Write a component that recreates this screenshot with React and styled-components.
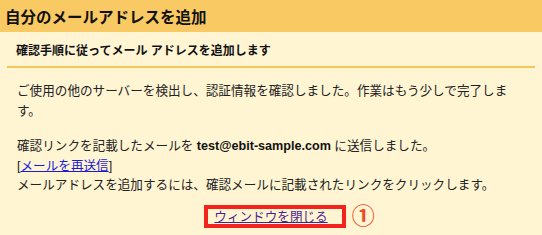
import React from 'react'
import styled, { createGlobalStyle } from 'styled-components'

const GlobalStyle = createGlobalStyle`
  html, body {
    margin: 0;
    padding: 0;
    background: #fff5d3;
  }
  body {
    font-family: "Liberation Sans", "Noto Sans CJK JP", sans-serif;
    color: #222;
  }
`

const App = () => {
  return (
    <Page>
      <GlobalStyle />
      <Header>自分のメールアドレスを追加</Header>
      <Content>
        <SubHead>確認手順に従ってメール アドレスを追加します</SubHead>
        <Message>
          <Para>
            ご使用の他のサーバーを検出し、認証情報を確認しました。作業はもう少しで完了します。
          </Para>
          <Para>
            確認リンクを記載したメールを <b>test@ebit-sample.com</b> に送信しました。
            <br />
            [<TextLink href="#">メールを再送信</TextLink>]
            <br />
            メールアドレスを追加するには、確認メールに記載されたリンクをクリックします。
          </Para>
        </Message>
        <Actions>
          <CloseBox>
            <CloseLink href="#">ウィンドウを閉じる</CloseLink>
            <Marker>①</Marker>
          </CloseBox>
        </Actions>
      </Content>
    </Page>
  )
}

export default App

const Page = styled.div`
  width: 542px;
  height: 235px;
  overflow: hidden;
  background: #fff5d3;
`

const Header = styled.div`
  height: 32px;
  background: #f9c964;
  display: flex;
  align-items: center;
  padding-left: 5px;
  font-size: 15.5px;
  font-weight: bold;
  color: #111;
`

const Content = styled.div`
  padding: 0 7px;
`

const SubHead = styled.div`
  height: 36px;
  display: flex;
  align-items: center;
  padding-left: 9px;
  padding-top: 1px;
  box-sizing: border-box;
  font-size: 12px;
  font-weight: bold;
  color: #111;
  border-bottom: 2px solid #f7c65a;
`

const Message = styled.div`
  padding: 14px 10px 0;
  font-size: 12.6px;
  line-height: 19.5px;
`

const Para = styled.p`
  margin: 0 0 16px;
  width: 500px;

  &:last-child {
    margin-bottom: 0;
  }

  b {
    font-weight: bold;
    color: #111;
  }
`

const TextLink = styled.a`
  color: #1a1ad8;
  text-decoration: underline;
`

const Actions = styled.div`
  display: flex;
  justify-content: center;
  padding-left: 8px;
  margin-top: 9px;
`

const CloseBox = styled.div`
  position: relative;
  border: 4px solid #f2241c;
  padding: 1px 14px 0 6px;
  font-size: 12.6px;
  line-height: 14px;
`

const CloseLink = styled.a`
  color: #4b1f8f;
  text-decoration: underline;
`

const Marker = styled.span`
  position: absolute;
  left: calc(100% + 10px);
  top: -7px;
  font-size: 23px;
  line-height: 24px;
  color: #ec4a28;
  font-family: "Noto Sans CJK JP", sans-serif;
  font-weight: bold;
`
